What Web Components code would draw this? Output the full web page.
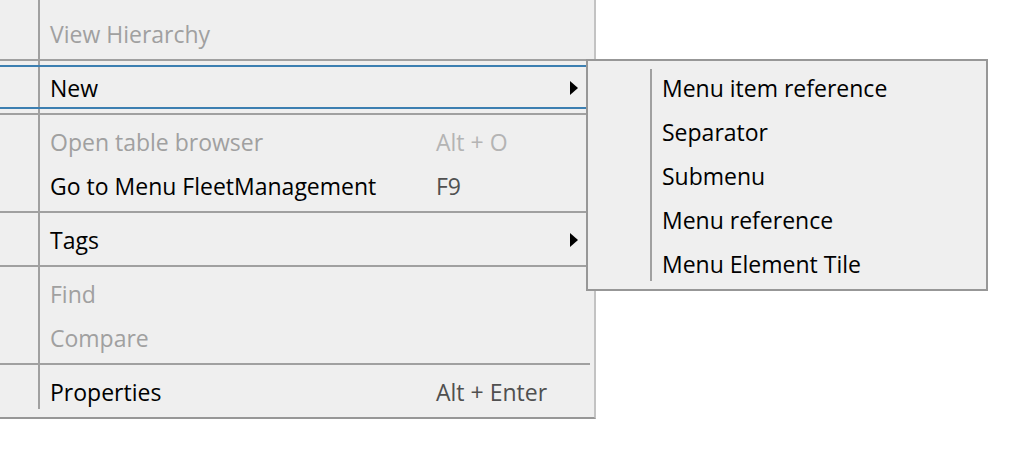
<!DOCTYPE html>
<html lang="en">
<head>
<meta charset="utf-8">
<title>Context menu</title>
<style>
body { margin: 0; background: #fff; font: 23px/30px "Open Sans", "Noto Sans", sans-serif; color: #000; }
</style>
</head>
<body>
<context-menus>
  <menu-panel slot="main" class="main" aria-label="Context menu">
    <menu-entry disabled>View Hierarchy</menu-entry>
    <menu-divider></menu-divider>
    <menu-entry active submenu>New</menu-entry>
    <menu-divider></menu-divider>
    <menu-entry disabled shortcut="Alt + O">Open table browser</menu-entry>
    <menu-entry shortcut="F9">Go to Menu FleetManagement</menu-entry>
    <menu-divider></menu-divider>
    <menu-entry submenu>Tags</menu-entry>
    <menu-divider></menu-divider>
    <menu-entry disabled>Find</menu-entry>
    <menu-entry disabled>Compare</menu-entry>
    <menu-divider></menu-divider>
    <menu-entry shortcut="Alt + Enter">Properties</menu-entry>
  </menu-panel>
  <menu-panel slot="sub" class="sub" aria-label="New">
    <menu-entry>Menu item reference</menu-entry>
    <menu-entry>Separator</menu-entry>
    <menu-entry>Submenu</menu-entry>
    <menu-entry>Menu reference</menu-entry>
    <menu-entry>Menu Element Tile</menu-entry>
  </menu-panel>
</context-menus>
<script>
class ShadowElement extends HTMLElement {
  constructor() {
    super();
    this.attachShadow({ mode: 'open' }).innerHTML = this.constructor.markup;
  }
}

// The root menu and the open submenu side by side; the submenu laps over the root's edge.
customElements.define('context-menus', class extends ShadowElement {
  static markup = `
    <style>
      :host { display: grid; grid-template-columns: minmax(0, 586fr) minmax(0, 402fr);
        align-items: start; padding-right: 25px; }
      ::slotted(.main) { margin-right: -10px; }
      ::slotted(.sub) { margin-top: 59px; }
    </style>
    <slot name="main"></slot><slot name="sub"></slot>`;
});

customElements.define('menu-panel', class extends ShadowElement {
  static markup = `
    <style>
      :host { display: block; box-sizing: border-box; position: relative; background: #efefef;
        border: 2px solid #979797; padding: 4px; --gutter: 60px; }
      :host(.main) { border-width: 0 2px 2px 0; border-right-color: #c3c3c3;
        padding: 11px 4px 4px 0; --gutter: 40px; }
      .line { position: absolute; top: 8px; bottom: 8px; left: 62px; width: 2px; background: #a0a0a0; }
      :host(.main) .line { top: 0; left: 38px; }
      .items { position: relative; }
    </style>
    <div class="line"></div>
    <div class="items" role="menu"><slot></slot></div>`;
  connectedCallback() {
    this.shadowRoot.querySelector('.items').setAttribute('aria-label', this.getAttribute('aria-label'));
  }
});

customElements.define('menu-divider', class extends ShadowElement {
  static markup = `
    <style>
      :host { display: block; padding: 4px 0; }
      hr { margin: 0; border: 0; height: 2px; background: #a0a0a0; }
    </style>
    <hr>`;
});

customElements.define('menu-entry', class extends ShadowElement {
  static markup = `
    <style>
      :host { display: block; }
      button { display: grid; grid-template-columns: 1fr auto; align-items: center; width: 100%; height: 44px;
        box-sizing: border-box; margin: 0; padding: 2px 0 0 calc(var(--gutter) + 10px);
        border: solid transparent; border-width: 2px 0; background: none; font: inherit; color: #000;
        text-align: left; white-space: nowrap; }
      .shortcut { width: 154px; color: #505050; }
      button:disabled { color: #a0a0a0; }
      button:disabled .shortcut { color: #b4b4b4; }
      :host([active]) button { border-color: #3c7fb1; }
      svg { display: block; margin-right: 12px; }
    </style>
    <button type="button" role="menuitem"><span class="label"><slot></slot></span></button>`;
  connectedCallback() {
    const button = this.shadowRoot.querySelector('button');
    button.disabled = this.hasAttribute('disabled');
    if (this.hasAttribute('shortcut')) {
      const keys = document.createElement('span');
      keys.className = 'shortcut';
      keys.textContent = this.getAttribute('shortcut');
      button.append(keys);
    }
    if (this.hasAttribute('submenu')) {
      button.setAttribute('aria-haspopup', 'menu');
      button.insertAdjacentHTML('beforeend',
        '<svg width="8" height="14" viewBox="0 0 8 14" aria-hidden="true"><path d="M0 0L8 7L0 14Z"/></svg>');
    }
  }
});
</script>
</body>
</html>
